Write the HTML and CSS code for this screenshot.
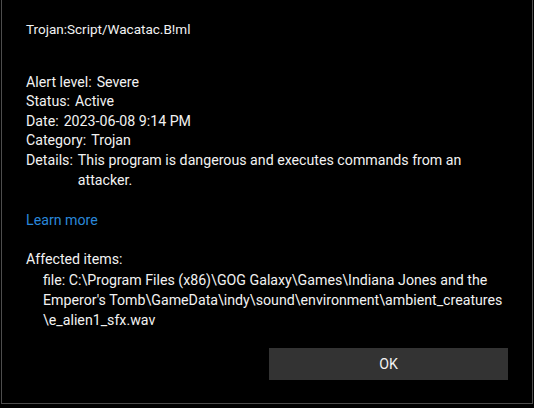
FILE: index.html
```html
<!DOCTYPE html>
<html lang="en">
<head>
  <meta charset="UTF-8">
  <title>Threat details</title>
  <link rel="stylesheet" href="styles.css">
</head>
<body>
<div class="dialog">

  <!-- Threat name -->
  <div class="title">Trojan:Script/Wacatac.B!ml</div>

  <!-- Threat properties -->
  <div class="props">
    <div class="prop"><span class="label">Alert level:</span><span class="value">Severe</span></div>
    <div class="prop"><span class="label">Status:</span><span class="value">Active</span></div>
    <div class="prop"><span class="label">Date:</span><span class="value">2023-06-08 9:14 PM</span></div>
    <div class="prop"><span class="label">Category:</span><span class="value">Trojan</span></div>
    <div class="prop"><span class="label">Details:</span><span class="value">This program is dangerous and executes commands from an attacker.</span></div>
  </div>

  <a class="learn" href="#">Learn more</a>

  <div class="affected">
    <div class="affected-head">Affected items:</div>
    <div class="item">file: C:\Program Files (x86)\GOG Galaxy\Games\Indiana Jones and the Emperor's Tomb\GameData\indy\sound\environment\ambient_creatures \e_alien1_sfx.wav</div>
  </div>

  <div class="footer">
    <button class="ok">OK</button>
  </div>
</div>
</body>
</html>
```

FILE: styles.css
```css
body {
  margin: 0;
  background-color: #000;
  font-family: Roboto, "Noto Sans", sans-serif;
  font-size: 14.2px;
  line-height: 19.6px;
  color: #f2f2f2;
}

/* Dialog frame, top edge is cut off */
.dialog {
  box-sizing: border-box;
  width: 532px;
  height: 404px;
  margin-left: 1px;
  border: 1px solid #4d4d4d;
  border-top: none;
  padding: 20px 0 0 24px;
  display: flex;
  flex-direction: column;
}

.title {
  font-size: 13.5px;
  margin-bottom: 33px;
}

.prop {
  display: flex;
  gap: 5px;
}
.prop .label {
  flex: none;
}
.prop .value {
  max-width: 420px;
}

.learn {
  margin-top: 21px;
  color: #2a87d9;
  text-decoration: none;
  align-self: flex-start;
}

.affected {
  margin-top: 19px;
}
.affected-head {
  margin-bottom: 2px;
}
.affected .item {
  padding-left: 17px;
  max-width: 475px;
}

/* OK button sits bottom right */
.footer {
  margin-top: auto;
  padding: 0 24px 23px 0;
  display: flex;
  justify-content: flex-end;
}
.ok {
  width: 239px;
  height: 32px;
  border: none;
  background-color: #333;
  color: #f2f2f2;
  font-family: inherit;
  font-size: 14.2px;
}
```
